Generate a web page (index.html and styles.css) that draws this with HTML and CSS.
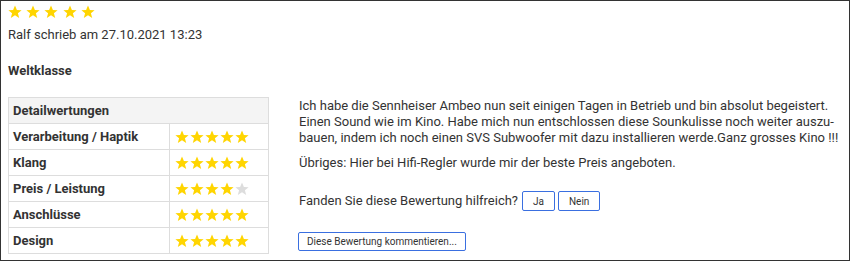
FILE: index.html
```html
<!DOCTYPE html>
<html>
<head>
    <title>Bewertung</title>
    <link rel="stylesheet" href="styles.css">
</head>
<body>
    <svg width="0" height="0" class="defs">
        <defs>
            <polygon id="star" points="7,0.5 8.9,5 13.6,5.2 9.9,8.2 11.2,12.9 7,10.2 2.8,12.9 4.1,8.2 0.4,5.2 5.1,5"/>
        </defs>
    </svg>
    <div class="review">
        <div class="stars top-stars">
            <svg class="star"><use href="#star"/></svg>
            <svg class="star"><use href="#star"/></svg>
            <svg class="star"><use href="#star"/></svg>
            <svg class="star"><use href="#star"/></svg>
            <svg class="star"><use href="#star"/></svg>
        </div>
        <div class="author">Ralf schrieb am 27.10.2021 13:23</div>
        <div class="title">Weltklasse</div>

        <div class="review-body">
            <table class="details">
                <colgroup>
                    <col class="col-label">
                    <col class="col-stars">
                </colgroup>
                <tr><th colspan="2">Detailwertungen</th></tr>
                <tr>
                    <td class="label">Verarbeitung / Haptik</td>
                    <td class="stars" data-rating="5"></td>
                </tr>
                <tr>
                    <td class="label">Klang</td>
                    <td class="stars" data-rating="5"></td>
                </tr>
                <tr>
                    <td class="label">Preis / Leistung</td>
                    <td class="stars" data-rating="4"></td>
                </tr>
                <tr>
                    <td class="label">Anschlüsse</td>
                    <td class="stars" data-rating="5"></td>
                </tr>
                <tr>
                    <td class="label">Design</td>
                    <td class="stars" data-rating="5"></td>
                </tr>
            </table>

            <div class="review-text">
                <p>Ich habe die Sennheiser Ambeo nun seit einigen Tagen in Betrieb und bin absolut begeistert. Einen Sound wie im Kino. Habe mich nun entschlossen diese Sounkulisse noch weiter auszu-<br>bauen, indem ich noch einen SVS Subwoofer mit dazu installieren werde.Ganz grosses Kino !!!</p>
                <p>Übriges: Hier bei Hifi-Regler wurde mir der beste Preis angeboten.</p>
                <div class="helpful">
                    Fanden Sie diese Bewertung hilfreich?
                    <button class="btn">Ja</button>
                    <button class="btn btn-nein">Nein</button>
                </div>
                <button class="btn btn-comment">Diese Bewertung kommentieren...</button>
            </div>
        </div>
    </div>

    <script>
      document.querySelectorAll('td.stars').forEach(cell => {
        const rating = Number(cell.dataset.rating);
        for (let i = 0; i < 5; i++) {
          const cls = i < rating ? 'star' : 'star off';
          cell.innerHTML += `<svg class="${cls}"><use href="#star"/></svg>`;
        }
      });
    </script>
</body>
</html>
```

FILE: styles.css
```css
body { margin: 0; font-family: Roboto, "Liberation Sans", sans-serif; color: #333; font-size: 13px; }
.defs { position: absolute; }
.review { width: 841px; height: 259px; border: 1px solid #333; padding: 0 0 0 7px; overflow: hidden; }
.star { width: 14px; height: 14px; fill: #ffd500; margin-right: 1px; vertical-align: top; }
.star.off { fill: #ddd; }
.top-stars { padding-top: 4px; height: 16px; }
.author { margin-top: 6px; line-height: 16px; }
.title { font-weight: bold; margin-top: 20px; line-height: 16px; }
.review-body { display: flex; align-items: flex-start; margin-top: 18px; }
.details { border-collapse: collapse; width: 260px; table-layout: fixed; flex-shrink: 0; }
.col-label { width: 161px; }
.col-stars { width: 99px; }
.details th { background: #f4f4f4; text-align: left; border: 1px solid #ddd; height: 25px; padding: 0 4px; font-size: 13px; }
.details td { border: 1px solid #ddd; height: 25px; padding: 0 4px; }
.details .label { font-weight: bold; white-space: nowrap; }
.details td.stars { padding: 0 0 0 5px; white-space: nowrap; font-size: 0; line-height: 0; }
.review-text { margin-left: 30px; margin-top: 1px; width: 542px; line-height: 16px; }
.review-text p { margin: 0 0 9px 0; }
.helpful { margin-top: 20px; display: flex; align-items: center; }
.btn { background: #fff; border: 1px solid #3a6fe0; border-radius: 2px; font-family: Roboto, "Liberation Sans", sans-serif; font-size: 10px; color: #333; height: 20px; padding: 0 10px; cursor: pointer; }
.helpful .btn { margin-left: 3px; }
.helpful .btn:first-of-type { margin-left: 4px; }
.btn-comment { margin-top: 21px; height: 19px; padding: 0 8px; margin-left: -1px; }
```
